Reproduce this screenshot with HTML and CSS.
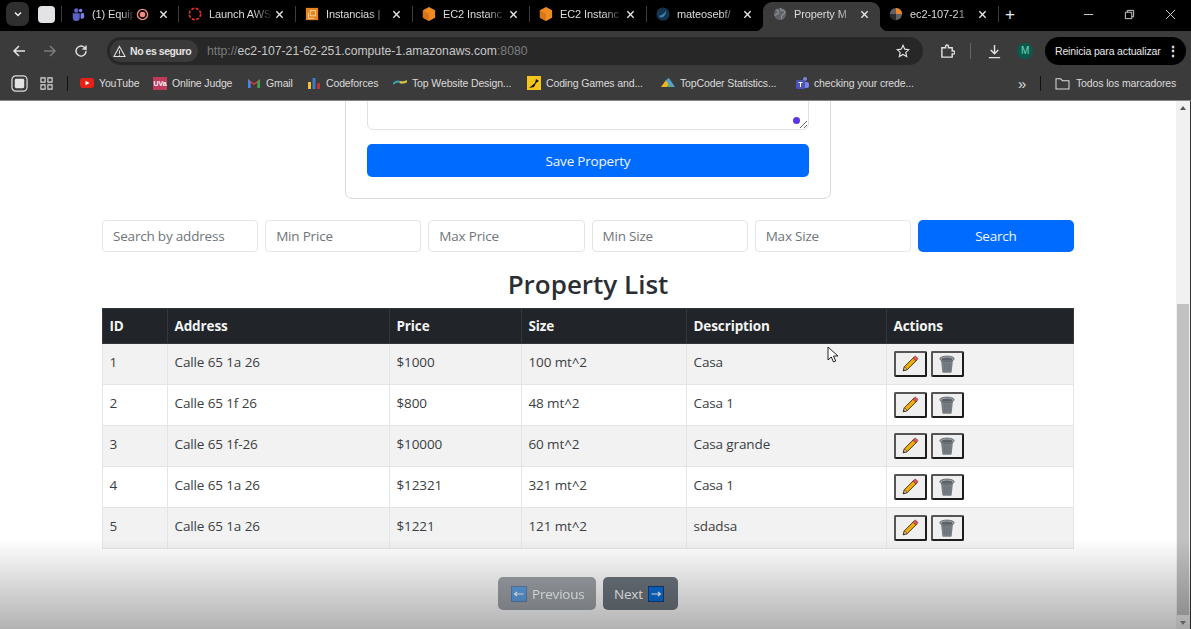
FILE: index.html
```html
<!DOCTYPE html>
<html lang="en">
<head>
<meta charset="utf-8">
<title>Property Manager</title>
<link rel="stylesheet" href="styles.css">
</head>
<body>
<svg class="defs" width="0" height="0" aria-hidden="true">
  <symbol id="pencil" viewBox="0 0 20 20">
    <path d="M2.500 17.500l1.300-4.500L14.300 2.500l3.200 3.200L7 16.200z" fill="#f2ac0c" stroke="#3a2c10" stroke-width="1"/>
    <path d="M13.300 3.500l1.700-1.700c.6-.6 1.200-.6 1.800 0l1.400 1.400c.6.6.6 1.200 0 1.800l-1.700 1.700z" fill="#dc5660" stroke="#7a3030" stroke-width=".8"/>
    <path d="M2.500 17.500l1.300-4.500 3.200 3.200z" fill="#f3d9b0" stroke="#3a2c10" stroke-width=".8"/>
    <path d="M2.500 17.500l.5-1.900 1.400 1.400z" fill="#222"/>
  </symbol>
  <symbol id="trash" viewBox="0 0 20 20">
    <path d="M3.300 5h13.400l-1.500 13.500c-.1.700-.6 1.200-1.300 1.200H6.100c-.7 0-1.200-.5-1.300-1.200z" fill="#777e83"/>
    <ellipse cx="10" cy="4.200" rx="8" ry="3" fill="#a0a6aa" stroke="#596066" stroke-width=".9"/>
    <ellipse cx="10" cy="4.700" rx="6" ry="1.800" fill="#5b6166"/>
    <path d="M7 9l.6 8.500M10 9v8.500M13 9l-.6 8.500" stroke="#666c71" stroke-width=".7"/>
  </symbol>
  <symbol id="close" viewBox="0 0 10 10"><path d="M1.500 1.500l7 7M8.500 1.500l-7 7" stroke="#e6e6e6" stroke-width="1.500"/></symbol>
  <symbol id="globe" viewBox="0 0 16 16"><circle cx="8" cy="8" r="7" fill="#5f6368"/><path d="M3 3c3 1 4 2 3 4S2 8 2 10M9 1c-1 3 1 3 3 3s2 3 0 4-3 2-2 6" stroke="#8a8e93" stroke-width="1.500" fill="none"/></symbol>
  <symbol id="aws" viewBox="0 0 16 16"><path d="M8 0l7 3.800v8.400L8 16l-7-3.800V3.800z" fill="#ef8c1f"/><path d="M8 8v8l-7-3.800V3.800z" fill="#d9761a"/></symbol>
</svg>

<div class="tabstrip">
  <button class="tabs-menu"><svg width="10" height="10" viewBox="0 0 10 10"><path d="M2 3.500l3 3 3-3" fill="none" stroke="#eee" stroke-width="1.500"/></svg></button>
  <span class="profile-square"></span>
  <div class="tab">
    <svg class="fav" viewBox="0 0 16 16"><circle cx="11" cy="4" r="2" fill="#7b83eb"/><circle cx="6" cy="4" r="2.500" fill="#5b62c4"/><path d="M2 7h8v5a4 4 0 0 1-8 0z" fill="#5b62c4"/><path d="M11 7h4v4a2.500 2.500 0 0 1-4 2z" fill="#7b83eb"/></svg>
    <span class="tab-title short">(1) Equip</span>
    <svg class="rec" viewBox="0 0 14 14"><circle cx="7" cy="7" r="5.500" fill="none" stroke="#f28b82" stroke-width="1.500"/><circle cx="7" cy="7" r="3" fill="#f28b82"/></svg>
    <svg class="x"><use href="#close"/></svg>
  </div>
  <div class="tab">
    <svg class="fav" viewBox="0 0 16 16"><circle cx="8" cy="8" r="6.500" fill="none" stroke="#e2352a" stroke-width="1.800" stroke-dasharray="3.500 1.600"/></svg>
    <span class="tab-title">Launch AWS</span>
    <svg class="x"><use href="#close"/></svg>
  </div>
  <div class="tab">
    <svg class="fav" viewBox="0 0 16 16"><rect x="1" y="1" width="14" height="14" fill="#e8851f"/><path d="M6 4h6v6H6zM4 7v6h6" fill="none" stroke="#f8d9b0" stroke-width="1"/></svg>
    <span class="tab-title">Instancias |</span>
    <svg class="x"><use href="#close"/></svg>
  </div>
  <div class="tab">
    <svg class="fav"><use href="#aws"/></svg>
    <span class="tab-title">EC2 Instanc</span>
    <svg class="x"><use href="#close"/></svg>
  </div>
  <div class="tab">
    <svg class="fav"><use href="#aws"/></svg>
    <span class="tab-title">EC2 Instanc</span>
    <svg class="x"><use href="#close"/></svg>
  </div>
  <div class="tab">
    <svg class="fav" viewBox="0 0 16 16"><circle cx="8" cy="8" r="7.500" fill="#12344d"/><path d="M3 10c3 0 6-2 9-6-1 4-2 8-7 8z" fill="#3d86b8"/></svg>
    <span class="tab-title">mateosebf/</span>
    <svg class="x"><use href="#close"/></svg>
  </div>
  <div class="tab active">
    <svg class="fav"><use href="#globe"/></svg>
    <span class="tab-title">Property M</span>
    <svg class="x"><use href="#close"/></svg>
  </div>
  <div class="tab last">
    <svg class="fav" viewBox="0 0 16 16"><circle cx="8" cy="8" r="7" fill="#5f6368"/><path d="M8 1a7 7 0 0 1 7 7H8z" fill="#e8872a"/><path d="M1 8a7 7 0 0 0 7 7V8z" fill="#2b2b2b"/></svg>
    <span class="tab-title">ec2-107-21</span>
    <svg class="x"><use href="#close"/></svg>
  </div>
  <span class="new-tab">+</span>
  <div class="win-controls">
    <svg class="win" viewBox="0 0 12 12"><path d="M1 6h10" stroke="#ddd" stroke-width="1"/></svg>
    <svg class="win" viewBox="0 0 12 12"><path d="M1.500 3.500h7v7h-7zM3.500 3.500v-2h7v7h-2" fill="none" stroke="#ddd" stroke-width="1"/></svg>
    <svg class="win" viewBox="0 0 12 12"><path d="M1 1l10 10M11 1L1 11" stroke="#ddd" stroke-width="1"/></svg>
  </div>
</div>

<div class="toolbar">
  <svg class="nav" viewBox="0 0 14 14"><path d="M13 7H2M7 2L2 7l5 5" fill="none" stroke="#e3e3e3" stroke-width="1.500"/></svg>
  <svg class="nav" viewBox="0 0 14 14"><path d="M1 7h11M7 2l5 5-5 5" fill="none" stroke="#7c7c7c" stroke-width="1.500"/></svg>
  <svg class="nav" viewBox="0 0 14 14"><path d="M12 7a5 5 0 1 1-1.500-3.500L12 5V1.500M12 5H8.500" fill="none" stroke="#e3e3e3" stroke-width="1.400"/></svg>
  <div class="omnibox">
    <span class="chip"><svg class="warn" viewBox="0 0 14 14"><path d="M7 1.500L13 12.500H1zM7 6v3.500M7 10.500v1" fill="none" stroke="#e3e3e3" stroke-width="1.100"/></svg>No es seguro</span>
    <span class="url"><span class="url-dim">http://</span>ec2-107-21-62-251.compute-1.amazonaws.com<span class="url-dim">:8080</span></span>
    <svg class="star" viewBox="0 0 16 16"><path d="M8 1.500l2 4.400 4.700.5-3.500 3.200 1 4.700L8 11.900l-4.200 2.400 1-4.700L1.300 6.400 6 5.900z" fill="none" stroke="#e3e3e3" stroke-width="1.300"/></svg>
  </div>
  <svg class="tool ext" viewBox="0 0 16 16"><path d="M2 4h4V2.500a1.500 1.500 0 0 1 3 0V4h4v3.500h1.500a1.500 1.500 0 0 1 0 3H13V14H2z" fill="none" stroke="#e3e3e3" stroke-width="1.500"/></svg>
  <span class="tool-sep"></span>
  <svg class="tool dl" viewBox="0 0 16 16"><path d="M8 1v9M4 6.500L8 10.500l4-4M2 14.500h12" fill="none" stroke="#e3e3e3" stroke-width="1.500"/></svg>
  <span class="avatar">M</span>
  <span class="update">Reinicia para actualizar<span class="dots">⋮</span></span>
</div>

<div class="bookmarks">
  <svg class="bm-first" viewBox="0 0 18 18"><rect x="1" y="1" width="16" height="16" rx="4" fill="none" stroke="#dcdcdc" stroke-width="1.300"/><rect x="4" y="4" width="10" height="10" rx="1.500" fill="#e4e4e4"/></svg>
  <svg class="bm-grid" viewBox="0 0 14 14"><path d="M1 1h4.500v4.500H1zM8.500 1H13v4.500H8.500zM1 8.500h4.500V13H1zM8.500 8.500H13V13H8.500z" fill="none" stroke="#dcdcdc" stroke-width="1.200"/></svg>
  <span class="bm-sep"></span>
  <span class="bm bm-yt"><svg class="bi" viewBox="0 0 14 14"><rect y="2" width="14" height="10" rx="3" fill="#e62117"/><path d="M5.500 4.800v4.400L9.500 7z" fill="#fff"/></svg>YouTube</span>
  <span class="bm bm-uva"><span class="uva">UVa</span>Online Judge</span>
  <span class="bm bm-gm"><svg class="bi" viewBox="0 0 14 14"><path d="M1 3v9h2.500V6.500L7 9l3.500-2.500V12H13V3l-6 4.500z" fill="#e34133"/><path d="M1 3v9h2.500V6z" fill="#4285f4"/><path d="M13 3v9h-2.500V6z" fill="#34a853"/></svg>Gmail</span>
  <span class="bm bm-cf"><svg class="bi" viewBox="0 0 14 14"><rect x="1" y="6" width="3" height="7" fill="#f5c12e"/><rect x="5.500" y="2" width="3" height="11" fill="#3b7dc4"/><rect x="10" y="7" width="3" height="6" fill="#c9302c"/></svg>Codeforces</span>
  <span class="bm bm-tw"><svg class="bi" viewBox="0 0 14 14"><path d="M0 8c3-3 5-3 7-2s4 1 7-1" fill="none" stroke="#3aa5b5" stroke-width="2"/><path d="M7 6c2 1 4 1 7-1" fill="none" stroke="#e3c133" stroke-width="2"/></svg>Top Website Design...</span>
  <span class="bm bm-cg"><svg class="bi" viewBox="0 0 14 14"><rect width="14" height="14" fill="#f6c51b"/><path d="M2 12l6-5 1-4 3 2-3 2-2 4z" fill="#111"/></svg>Coding Games and...</span>
  <span class="bm bm-tc"><svg class="bi" viewBox="0 0 14 14"><path d="M0 11l5-7 3 4-2 3z" fill="#f0b429"/><path d="M5 4l3-2 6 9H9z" fill="#4fa3d1"/><path d="M6 11l2-3 2 3z" fill="#68b04d"/></svg>TopCoder Statistics...</span>
  <span class="bm bm-tm"><svg class="bi" viewBox="0 0 14 14"><circle cx="10" cy="3" r="2" fill="#7b83eb"/><rect x="8" y="6" width="6" height="6" rx="2" fill="#7b83eb"/><rect x="1" y="4" width="9" height="9" rx="1.500" fill="#4b53bc"/><path d="M3.500 6.500h4M5.500 6.500v4.500" stroke="#fff" stroke-width="1"/></svg>checking your crede...</span>
  <span class="bm-more">»</span>
  <span class="bm-sep2"></span>
  <span class="bm all"><svg class="folder" viewBox="0 0 16 14"><path d="M1 2h5l2 2h7v9H1z" fill="none" stroke="#dcdcdc" stroke-width="1.100"/></svg>Todos los marcadores</span>
</div>

<div class="viewport">
  <main class="page">
    <section class="card">
      <textarea class="desc" aria-label="Description" readonly></textarea>
      <span class="grammar-dot"></span>
      <button class="btn-primary save">Save Property</button>
    </section>
    <div class="filters">
      <input class="field" placeholder="Search by address">
      <input class="field" placeholder="Min Price">
      <input class="field" placeholder="Max Price">
      <input class="field" placeholder="Min Size">
      <input class="field" placeholder="Max Size">
      <button class="btn-primary search">Search</button>
    </div>
    <h2 class="title">Property List</h2>
    <table class="list">
      <colgroup><col class="c-id"><col class="c-addr"><col class="c-price"><col class="c-size"><col class="c-desc"><col class="c-act"></colgroup>
      <thead><tr><th>ID</th><th>Address</th><th>Price</th><th>Size</th><th>Description</th><th>Actions</th></tr></thead>
      <tbody>
        <tr><td>1</td><td>Calle 65 1a 26</td><td>$1000</td><td>100 mt^2</td><td>Casa</td><td class="acts"><button class="act"><svg class="ai"><use href="#pencil"/></svg></button><button class="act"><svg class="ai"><use href="#trash"/></svg></button></td></tr>
        <tr><td>2</td><td>Calle 65 1f 26</td><td>$800</td><td>48 mt^2</td><td>Casa 1</td><td class="acts"><button class="act"><svg class="ai"><use href="#pencil"/></svg></button><button class="act"><svg class="ai"><use href="#trash"/></svg></button></td></tr>
        <tr><td>3</td><td>Calle 65 1f-26</td><td>$10000</td><td>60 mt^2</td><td>Casa grande</td><td class="acts"><button class="act"><svg class="ai"><use href="#pencil"/></svg></button><button class="act"><svg class="ai"><use href="#trash"/></svg></button></td></tr>
        <tr><td>4</td><td>Calle 65 1a 26</td><td>$12321</td><td>321 mt^2</td><td>Casa 1</td><td class="acts"><button class="act"><svg class="ai"><use href="#pencil"/></svg></button><button class="act"><svg class="ai"><use href="#trash"/></svg></button></td></tr>
        <tr><td>5</td><td>Calle 65 1a 26</td><td>$1221</td><td>121 mt^2</td><td>sdadsa</td><td class="acts"><button class="act"><svg class="ai"><use href="#pencil"/></svg></button><button class="act"><svg class="ai"><use href="#trash"/></svg></button></td></tr>
      </tbody>
    </table>
    <nav class="pager">
      <button class="pg prev"><svg class="arrow" viewBox="0 0 16 16"><rect x=".5" y=".5" width="15" height="15" fill="#0a6fd6" stroke="#0b3f80"/><path d="M12.500 8h-9M6 6L3.500 8 6 10" fill="none" stroke="#fff" stroke-width="1.100"/></svg>Previous</button>
      <button class="pg next">Next<svg class="arrow" viewBox="0 0 16 16"><rect x=".5" y=".5" width="15" height="15" fill="#0a6fd6" stroke="#0b3f80"/><path d="M3.500 8h9M10 6l2.500 2L10 10" fill="none" stroke="#fff" stroke-width="1.100"/></svg></button>
    </nav>
  </main>
  <div class="scrollbar">
    <span class="sb-up"></span>
    <span class="sb-track"><span class="sb-thumb"></span></span>
    <span class="sb-down"></span>
  </div>
  <svg class="cursor" viewBox="0 0 12 18"><path d="M1 1v13l3.300-3 2.200 5 2.200-1-2.200-5H11z" fill="#fff" stroke="#222" stroke-width="1"/></svg>
  <div class="shade"></div>
</div>
</body>
</html>
```

FILE: styles.css
```css
* { box-sizing: border-box; }
html, body { margin: 0; height: 100%; }
body {
  width: 1191px;
  height: 629px;
  overflow: hidden;
  display: flex;
  flex-direction: column;
  background: #fff;
  font-family: "Open Sans", "Noto Sans", sans-serif;
  color: #2b2f33;
}
.defs { position: absolute; }

/* Browser chrome */
.tabstrip {
  height: 31px;
  flex: none;
  display: flex;
  align-items: center;
  padding-bottom: 3px;
  background: #000;
  color: #dcdcdc;
  font: 11px "Liberation Sans", sans-serif;
  letter-spacing: -.1px;
}
.tabs-menu {
  width: 23px;
  height: 24px;
  margin-left: 6px;
  padding: 0;
  border: 0;
  border-radius: 7px;
  background: #2f2f2f;
  display: flex;
  align-items: center;
  justify-content: center;
}
.profile-square {
  width: 17px;
  height: 17px;
  margin: 0 6px 0 9px;
  border-radius: 4px;
  background: #e3e3e6;
}
.tab {
  width: 117px;
  height: 16px;
  flex: none;
  display: flex;
  align-items: center;
  padding: 0 11px 0 9px;
  border-left: 1px solid #3c3c3c;
}
.tab .fav { width: 14px; height: 14px; flex: none; }
.tab-title {
  flex: 1;
  min-width: 0;
  margin-left: 7px;
  white-space: nowrap;
  -webkit-mask-image: linear-gradient(90deg, #000 70%, rgba(0,0,0,.1) 100%);
  mask-image: linear-gradient(90deg, #000 70%, rgba(0,0,0,.1) 100%);
}
.tab .x { width: 9px; height: 9px; flex: none; margin-left: 4px; }
.rec { width: 13px; height: 13px; flex: none; margin: 0 6px 0 2px; }
.tab-title.short { flex: 0 0 42px; }
.tab.active {
  position: relative;
  height: 29px;
  margin-bottom: -3px;
  padding-bottom: 5px;
  padding-left: 10px;
  align-self: flex-end;
  border-left: 0;
  border-radius: 9px 9px 0 0;
  background: #3b3b3b;
}
.tab.active::before,
.tab.active::after {
  content: "";
  position: absolute;
  bottom: 0;
  width: 8px;
  height: 8px;
}
.tab.active::before { left: -8px; background: radial-gradient(circle at 0 0, #000 8px, #3b3b3b 8.500px); }
.tab.active::after { right: -8px; background: radial-gradient(circle at 100% 0, #000 8px, #3b3b3b 8.500px); }
.tab.active + .tab { border-left: 0; }
.tab.last { width: 119px; border-right: 1px solid #3c3c3c; }
.new-tab { margin-left: 6px; width: 12px; font-size: 17px; color: #eee; line-height: 1; }
.win-controls { margin-left: auto; margin-right: 15px; display: flex; gap: 30px; }
.win { width: 11px; height: 11px; display: block; }

.toolbar {
  height: 37px;
  flex: none;
  display: flex;
  align-items: center;
  padding: 3px 0 0 12px;
  background: #3b3b3b;
  font: 10.500px "Liberation Sans", sans-serif;
  letter-spacing: -.15px;
  color: #e3e3e3;
}
.nav { width: 14px; height: 14px; margin-right: 17px; flex: none; }
.omnibox {
  width: 816px;
  height: 28px;
  margin-left: 2px;
  padding: 0 13px 0 3px;
  display: flex;
  align-items: center;
  border-radius: 14px;
  background: #272727;
}
.chip {
  width: 88px;
  height: 22px;
  padding-left: 3px;
  flex: none;
  display: flex;
  align-items: center;
  gap: 4px;
  border-radius: 11px;
  background: #3a3a3a;
  font-weight: 700;
  letter-spacing: -.45px;
  white-space: nowrap;
}
.warn { width: 13px; height: 13px; flex: none; }
.url { margin-left: 9px; font-size: 12.200px; letter-spacing: 0; color: #c7c7c7; white-space: nowrap; }
.url-dim { color: #7d7d7d; }
.star { width: 14px; height: 14px; margin-left: auto; }
.tool { width: 15px; height: 15px; flex: none; }
.ext { margin-left: 17px; }
.tool-sep { width: 1px; height: 16px; margin: 0 16px 0 15px; background: #666; }
.avatar {
  width: 16px;
  height: 16px;
  margin-left: 15px;
  border-radius: 50%;
  background: #0b5a4c;
  color: #6fd9b8;
  font-size: 10px;
  text-align: center;
  line-height: 16px;
}
.update {
  width: 141px;
  height: 28px;
  margin-left: 12px;
  padding-left: 10px;
  display: flex;
  align-items: center;
  border-radius: 14px;
  background: #000;
  color: #e8e8e8;
  white-space: nowrap;
}
.dots { margin-left: 5px; font-size: 14px; font-weight: 700; }

.bookmarks {
  height: 33px;
  flex: none;
  display: flex;
  align-items: center;
  padding: 0 0 2px 11px;
  background: #3b3b3b;
  border-bottom: 1px solid #888;
  font: 10.500px "Liberation Sans", sans-serif;
  letter-spacing: -.13px;
  color: #dcdcdc;
  white-space: nowrap;
}
.bm-first { width: 17px; height: 17px; flex: none; }
.bm-grid { width: 13px; height: 13px; margin-left: 12px; flex: none; }
.bm-sep { width: 1px; height: 15px; margin: 0 12px 0 14px; background: #111; }
.bm { display: flex; align-items: center; gap: 5px; flex: none; }
.bi { width: 14px; height: 14px; flex: none; }
.uva {
  width: 14px;
  height: 13px;
  background: #c23a5e;
  color: #fff;
  font-size: 7px;
  font-weight: 700;
  line-height: 13px;
  text-align: center;
}
.bm-yt { width: 73px; }
.bm-uva { width: 94px; }
.bm-gm { width: 60px; }
.bm-cf { width: 86px; }
.bm-tw { width: 134px; }
.bm-cg { width: 134px; }
.bm-tc { width: 134px; }
.bm-tm { width: 219px; }
.bm-more { width: 16px; font-size: 15px; text-align: center; }
.bm-sep2 { width: 1px; height: 15px; margin: 0 14px 0 10px; background: #111; }
.folder { width: 15px; height: 13px; flex: none; }
.all { gap: 6px; }

/* Page */
.viewport {
  position: relative;
  flex: 1;
  min-height: 0;
  display: flex;
  overflow: hidden;
}
.page {
  flex: 1;
  min-width: 0;
  display: flex;
  flex-direction: column;
  align-items: center;
}
.card {
  position: relative;
  width: 486px;
  margin-top: -41px;
  padding: 0 21px 21px;
  flex: none;
  background: #fff;
  border: 1px solid #d9d9d9;
  border-radius: 7px;
}
.desc {
  display: block;
  width: 100%;
  height: 69px;
  border: 1px solid #dfe2e5;
  border-radius: 6px;
  outline: 0;
}
.grammar-dot {
  position: absolute;
  right: 30px;
  top: 56px;
  width: 7px;
  height: 7px;
  border-radius: 50%;
  background: #5b35e0;
}
.btn-primary {
  border: 0;
  border-radius: 5px;
  background: #006cff;
  color: #f1f6ff;
  font: 13.500px "Open Sans", sans-serif;
  letter-spacing: -.2px;
}
.save { display: block; width: 100%; height: 33px; margin-top: 14px; }
.filters {
  width: 972px;
  height: 32px;
  margin-top: 21px;
  flex: none;
  display: grid;
  grid-template-columns: repeat(6, 1fr);
  gap: 7px;
}
.field {
  min-width: 0;
  padding: 0 10px;
  border: 1px solid #e2e5e8;
  border-radius: 4px;
  font: 13.500px "Open Sans", sans-serif;
  letter-spacing: -.2px;
  outline: 0;
}
.field::placeholder { color: #6f757b; }
.title {
  margin: 14px 0 0;
  height: 42px;
  flex: none;
  font: 600 26px/36px "Open Sans", sans-serif;
  color: #2b2f33;
}
.list {
  width: 971px;
  margin-right: 1px;
  flex: none;
  border-collapse: collapse;
  table-layout: fixed;
  font-size: 13.500px;
  letter-spacing: -.12px;
}
.c-id { width: 65px; }
.c-addr { width: 222px; }
.c-price { width: 132px; }
.c-size { width: 165px; }
.c-desc { width: 200px; }
.c-act { width: 187px; }
.list th {
  height: 35px;
  padding: 0 7px;
  background: #212529;
  color: #f4f4f4;
  border: 1px solid #32383e;
  font-weight: 700;
  text-align: left;
}
.list td {
  height: 41px;
  padding: 0 7px 4px;
  border: 1px solid #e3e6e8;
  color: #3a3e42;
}
.list tbody tr:nth-child(odd) td { background: #f2f2f2; }
.list td.acts { padding: 0 7px 1px; }
.acts { font-size: 0; }
.act {
  width: 33px;
  height: 26px;
  margin-right: 4px;
  padding: 0;
  border: 2px solid #1d1d1d;
  border-top-color: #555;
  border-left-color: #555;
  border-radius: 2px;
  background: #efefef;
  display: inline-flex;
  align-items: center;
  justify-content: center;
}
.ai { width: 18px; height: 18px; }
.pager {
  margin: 28px 0 0;
  flex: none;
  display: flex;
  gap: 7px;
}
.pg {
  height: 33px;
  display: flex;
  align-items: center;
  gap: 5px;
  border: 0;
  border-radius: 5px;
  background: #6c757d;
  color: #fff;
  font: 13.500px "Open Sans", sans-serif;
  letter-spacing: -.2px;
}
.prev { opacity: .65; width: 98px; padding: 0 11px 0 13px; }
.next { width: 75px; padding: 0 11px; }
.arrow { width: 16px; height: 16px; flex: none; }

.scrollbar {
  width: 15px;
  flex: none;
  display: flex;
  flex-direction: column;
  align-items: center;
  background: #f1f1f1;
  border-right: 1px solid #333;
}
.sb-up, .sb-down { height: 14px; flex: none; position: relative; width: 100%; }
.sb-up::after {
  content: "";
  position: absolute;
  left: 4px;
  top: 5px;
  border: 3px solid transparent;
  border-top: 0;
  border-bottom: 4px solid #555;
}
.sb-down::after {
  content: "";
  position: absolute;
  left: 4px;
  top: 6px;
  border: 3px solid transparent;
  border-bottom: 0;
  border-top: 4px solid #888;
}
.sb-track { flex: 1; width: 100%; padding: 189px 1px 0; display: flex; }
.sb-thumb { flex: 1; background: #c1c1c1; }

.cursor { position: absolute; left: 827px; top: 245px; width: 12px; height: 18px; }
.shade {
  position: absolute;
  left: 0;
  right: 0;
  bottom: 0;
  height: 90px;
  background: linear-gradient(180deg, rgba(0,0,0,0), rgba(0,0,0,.3));
  pointer-events: none;
}
```
